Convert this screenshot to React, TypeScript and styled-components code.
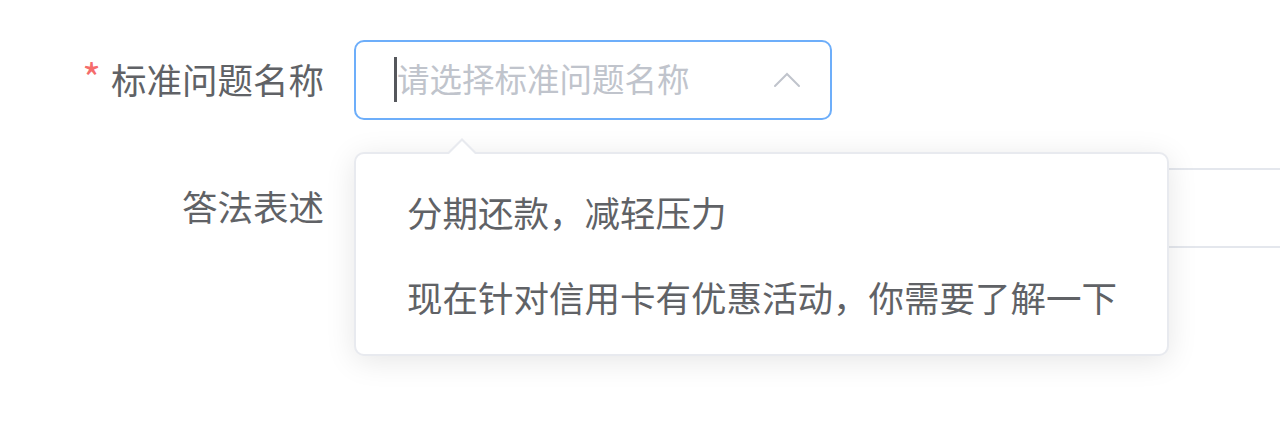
import React from "react";
import styled, { createGlobalStyle } from "styled-components";

const GlobalStyle = createGlobalStyle`
    html, body {
        margin: 0;
        padding: 0;
        background: #ffffff;
    }
    body {
        min-height: 100vh;
        font-family: "Noto Sans CJK SC", "Noto Sans", "Liberation Sans", sans-serif;
        -webkit-font-smoothing: antialiased;
    }
`;

const Form = styled.div`
    display: flex;
    flex-direction: column;
    gap: 48px;
    padding: 40px 0 0 54px;
`;

const FormItem = styled.div`
    display: flex;
    align-items: center;
    height: 80px;
`;

const Label = styled.label`
    width: 300px;
    box-sizing: border-box;
    padding-right: 30px;
    text-align: right;
    font-size: 35.5px;
    line-height: 80px;
    margin-top: -4px;
    color: #606266;
    flex-shrink: 0;
`;

const Required = styled.span`
    color: #f56c6c;
    font-size: 40px;
    margin-right: 10px;
`;

const SelectWrap = styled.div`
    position: relative;
    width: 478px;
    height: 80px;
`;

const InputBox = styled.div<{ $focused?: boolean; $open?: boolean }>`
    display: flex;
    align-items: center;
    box-sizing: border-box;
    width: 100%;
    height: 80px;
    padding: 0 29px 0 38px;
    border: 2px solid ${(p) => (p.$focused ? "#6daefa" : "#e4e7ed")};
    border-radius: 10px;
    background: #ffffff;
    ${(p) =>
        p.$open &&
        `
        flex: 1;
        border-right: none;
        border-radius: 10px 0 0 10px;
    `}
`;

const Caret = styled.span`
    display: block;
    width: 3px;
    height: 45px;
    margin-top: -2px;
    background: #55575c;
    flex-shrink: 0;
`;

const Placeholder = styled.span`
    flex: 1;
    font-size: 32.5px;
    line-height: 80px;
    margin-top: -4px;
    color: #c0c4cc;
    white-space: nowrap;
`;

const Popper = styled.div`
    position: absolute;
    top: 112px;
    left: 0;
    width: 815px;
    box-sizing: border-box;
    padding: 15px 0;
    background: #ffffff;
    border: 2px solid #e8eaef;
    border-radius: 10px;
    box-shadow: 0 5px 30px 0 rgba(0, 0, 0, 0.1);
    z-index: 10;

    &::before,
    &::after {
        content: "";
        position: absolute;
        left: 91px;
        width: 0;
        height: 0;
        border-style: solid;
        border-color: transparent;
        border-width: 0 15px 15px 15px;
    }
    &::before {
        top: -16px;
        border-bottom-color: #e8eaef;
    }
    &::after {
        top: -13px;
        border-bottom-color: #ffffff;
    }
`;

const Option = styled.div`
    height: 85px;
    line-height: 85px;
    padding: 0 51px;
    font-size: 35.5px;
    color: #606266;
    white-space: nowrap;
`;

const ArrowUp = () => (
    <svg width="28" height="16" viewBox="0 0 28 16" fill="none">
        <path d="M2 14 L14 2 L26 14" stroke="#c0c4cc" strokeWidth="2" strokeLinecap="round" />
    </svg>
);

const options = ["分期还款，减轻压力", "现在针对信用卡有优惠活动，你需要了解一下"];

const App = () => {
    return (
        <>
            <GlobalStyle />
            <Form>
                <FormItem>
                    <Label>
                        <Required>*</Required>标准问题名称
                    </Label>
                    <SelectWrap>
                        <InputBox $focused>
                            <Caret />
                            <Placeholder>请选择标准问题名称</Placeholder>
                            <ArrowUp />
                        </InputBox>
                        <Popper>
                            {options.map((o) => (
                                <Option key={o}>{o}</Option>
                            ))}
                        </Popper>
                    </SelectWrap>
                </FormItem>
                <FormItem>
                    <Label>答法表述</Label>
                    <InputBox $open />
                </FormItem>
            </Form>
        </>
    );
};

export default App;
